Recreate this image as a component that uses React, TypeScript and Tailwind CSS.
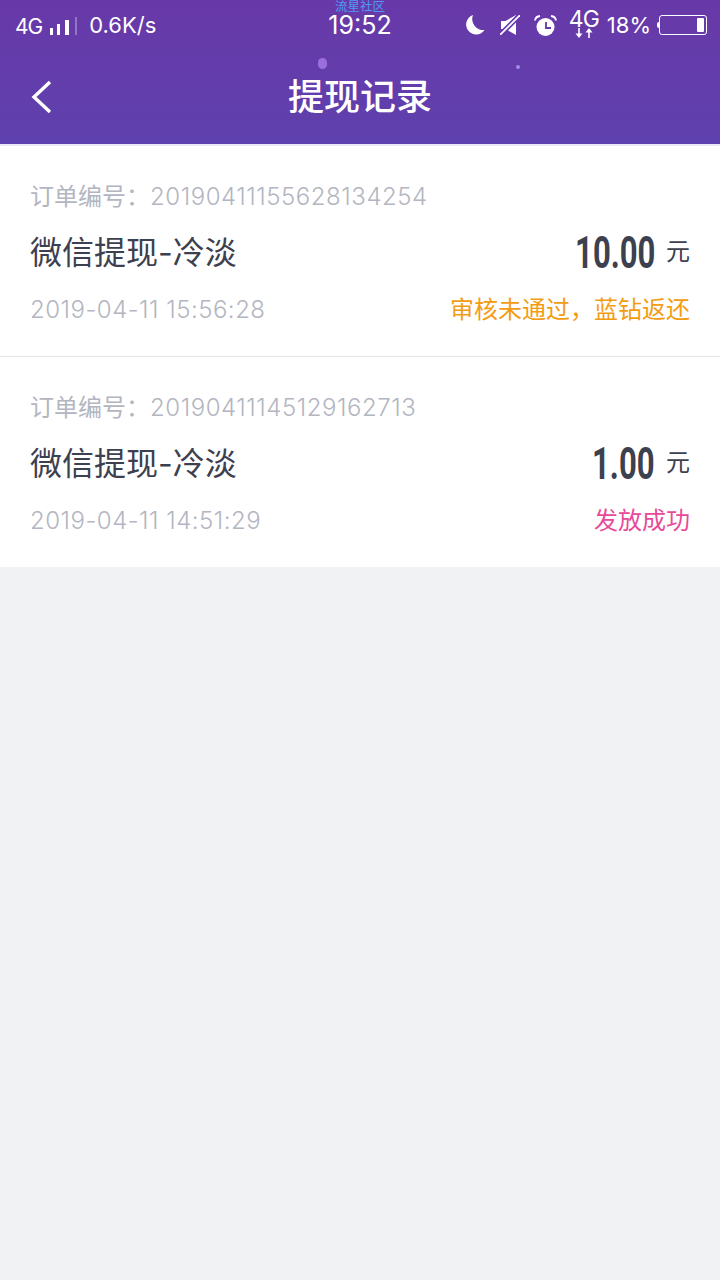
const SANS = "font-['Inter','Noto_Sans_CJK_SC',sans-serif]";

interface RecordProps {
  orderNo: string;
  title: string;
  amount: string;
  time: string;
  status: string;
  statusClass: string;
}

const Moon = () => (
  <svg width="20" height="20" viewBox="0 0 20 20">
    <path d="M8 0A10 10 0 1 0 19.5 15 11 11 0 0 1 8 0z" fill="#fff" />
  </svg>
);

const Mute = () => (
  <svg width="20" height="20" viewBox="0 0 20 20">
    <path d="M1 6h4.500L16 0v20L5.500 14H1z" fill="#fff" />
    <path d="M0 20L20 0" stroke="#6339a9" strokeWidth="5" />
    <path d="M0 20L20 0" stroke="#fff" strokeWidth="1.6" />
  </svg>
);

const Alarm = () => (
  <svg width="23" height="21" viewBox="0 0 23 21">
    <circle cx="11.500" cy="12" r="9" fill="#fff" />
    <path d="M12 7v6h5" fill="none" stroke="#6339a9" strokeWidth="1.8" />
    <path d="M1 5.500Q1.500 1.500 6 1M22 5.500Q21.500 1.500 17 1" fill="none" stroke="#fff" strokeWidth="1.8" />
  </svg>
);

const Arrows = () => (
  <svg width="20" height="10" viewBox="0 0 20 10">
    <path d="M5 0v6" stroke="#fff" strokeWidth="1.600" />
    <path d="M1.500 5.500h7L5 10z" fill="#fff" />
    <path d="M15 10V4" stroke="#fff" strokeWidth="1.600" />
    <path d="M11.500 4.500h7L15 0z" fill="#fff" />
  </svg>
);

const StatusBar = () => (
  <div className="relative flex h-[50px] items-center pl-[15px] pr-[13px] text-white">
    <span className="mt-[4px] text-[21px] tracking-[-1px]">4G</span>
    <div className="ml-[8px] mt-[1px] flex h-[18px] items-end">
      <div className="h-[7px] w-[3px] bg-white" />
      <div className="ml-[4px] h-[11px] w-[3px] bg-white" />
      <div className="ml-[5px] h-[15px] w-[4px] bg-white" />
      <div className="ml-[6px] h-[18px] w-[2px] bg-white/30" />
    </div>
    <span className="ml-[12px] text-[22px] leading-none">0.6K/s</span>
    <div className="absolute left-0 right-0 top-0 flex flex-col items-center">
      <span className="h-[13px] text-[12.5px] leading-[13px] text-[#4f9bf5]">流星社区</span>
      <span className="mt-[2px] text-[25px] leading-[20px]">19:52</span>
    </div>
    <div className="ml-auto flex items-center">
      <Moon />
      <div className="ml-[15px]">
        <Mute />
      </div>
      <div className="ml-[14px]">
        <Alarm />
      </div>
      <div className="-mt-[3px] ml-[12px] flex w-[30px] flex-col items-center">
        <span className="h-[18px] text-[23px] leading-[18px] tracking-[-1px]">4G</span>
        <Arrows />
      </div>
      <span className="ml-[8px] text-[22px] leading-none">18%</span>
      <div className="ml-[6px] h-[6px] w-[2px] rounded-l-full bg-white" />
      <div className="flex h-[20px] w-[48px] items-center justify-end rounded-[3px] border border-white pr-[2px]">
        <div className="h-[14px] w-[7px] rounded-[1px] bg-white" />
      </div>
    </div>
  </div>
);

const Header = () => (
  <header className="relative h-[146px] border-b-2 border-[#ece8f5] bg-gradient-to-b from-[#6838a8] to-[#5e41ae]">
    <StatusBar />
    <div className="relative flex h-[94px] items-center justify-center">
      <svg className="absolute left-[30px] top-[29px]" width="24" height="36" viewBox="0 0 24 36">
        <path d="M20 3L4 18l16 15" fill="none" stroke="#fff" strokeWidth="3.4" />
      </svg>
      <h1 className="text-[36px] font-medium leading-none text-white">提现记录</h1>
    </div>
    <div className="absolute left-[318px] top-[58px] h-[11px] w-[9px] rounded-full bg-[#9a6fdc]" />
    <div className="absolute left-[516px] top-[65px] h-[4px] w-[4px] rounded-full bg-[#9c8fe6]" />
  </header>
);

const RecordRow = ({ orderNo, title, amount, time, status, statusClass }: RecordProps) => (
  <div className="flex h-[210px] flex-col px-[30px] pt-[36px]">
    <div className="h-[30px] text-[24px] leading-[30px] text-[#b3b6c1]">
      订单编号：<span className="font-light tracking-[0.55px]">{orderNo}</span>
    </div>
    <div className="mt-[10px] flex h-[62px] items-center justify-between">
      <span className="text-[32px] leading-none text-[#3d404e]">{title}</span>
      <div className="-mt-[2px] flex items-center">
        <span className="mr-[1px] origin-right scale-x-[0.69] font-['Roboto',sans-serif] text-[45px] font-bold leading-none text-[#3d404e]">
          {amount}
        </span>
        <span className="ml-[10px] text-[24px] leading-none text-[#3d404e]">元</span>
      </div>
    </div>
    <div className="mt-[11px] flex h-[30px] items-center justify-between text-[24px] leading-[30px]">
      <span className="font-light tracking-[0.5px] text-[#b3b6c1]">{time}</span>
      <span className={statusClass}>{status}</span>
    </div>
  </div>
);

export default function App() {
  return (
    <div className={`flex h-[1280px] w-[720px] flex-col overflow-hidden bg-[#f0f2f4] ${SANS}`}>
      <Header />
      <div className="bg-white">
        <RecordRow
          orderNo="20190411155628134254"
          title="微信提现-冷淡"
          amount="10.00"
          time="2019-04-11 15:56:28"
          status="审核未通过，蓝钻返还"
          statusClass="text-[#f39c12]"
        />
        <div className="h-px bg-[#e6e6e9]" />
        <RecordRow
          orderNo="20190411145129162713"
          title="微信提现-冷淡"
          amount="1.00"
          time="2019-04-11 14:51:29"
          status="发放成功"
          statusClass="text-[#e84a9a]"
        />
      </div>
    </div>
  );
}
